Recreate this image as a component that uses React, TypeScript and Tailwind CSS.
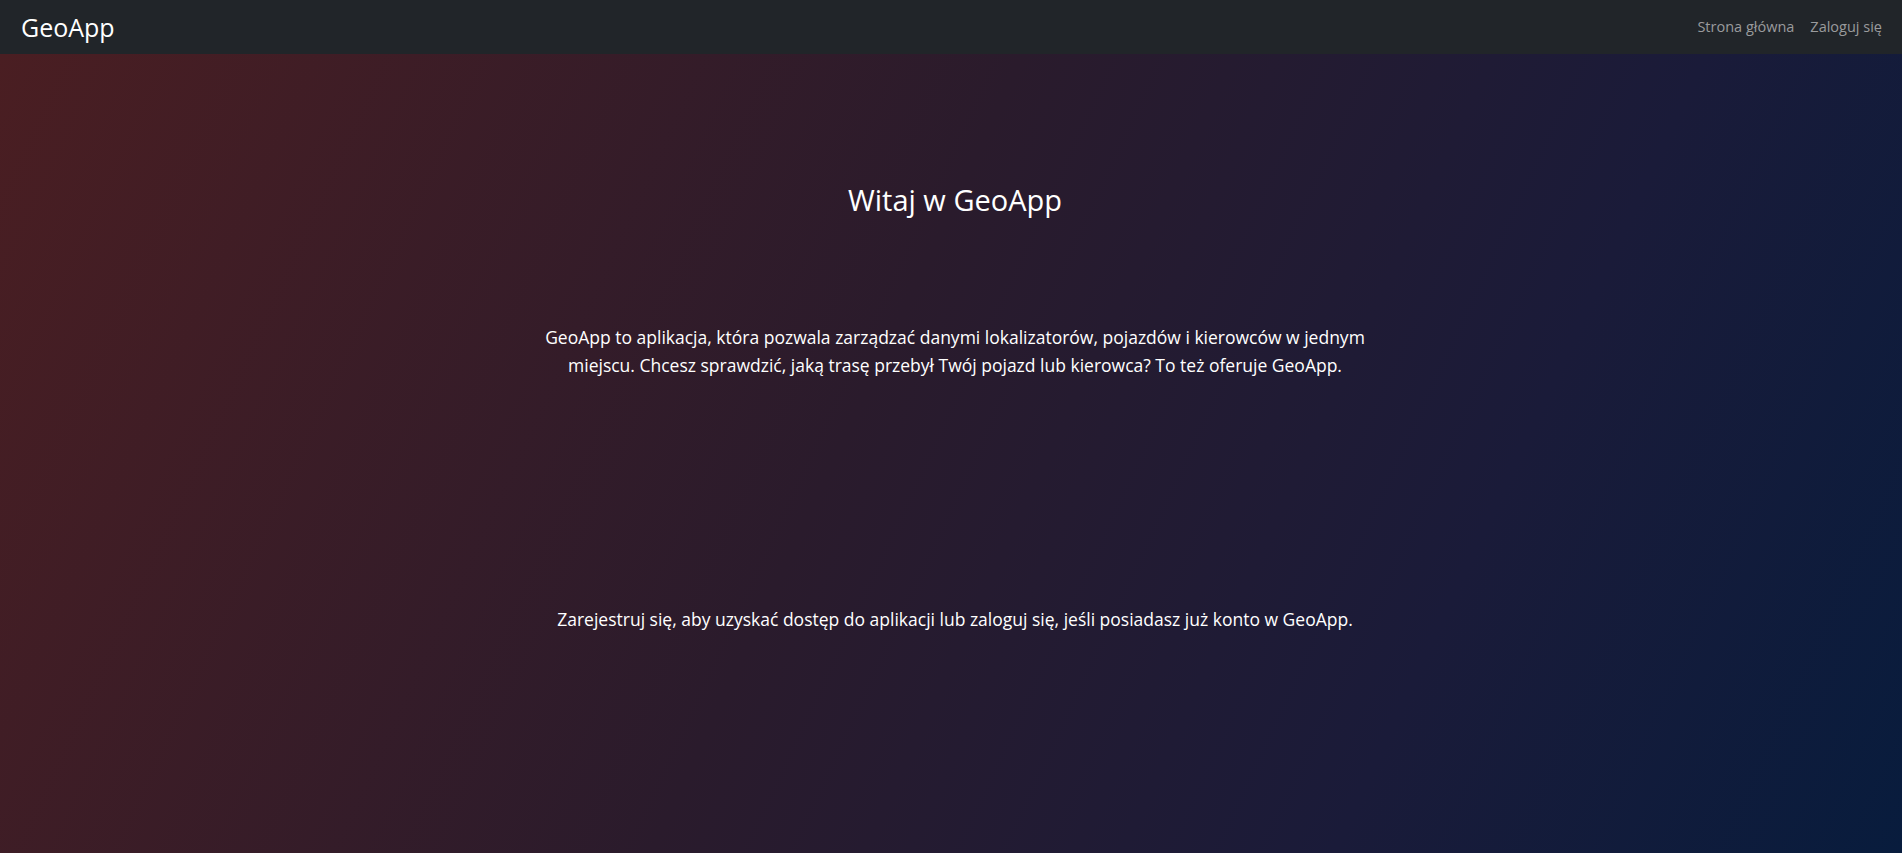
import React from "react";

function App() {
  return (
    <div className="min-h-screen flex flex-col font-['Open_Sans',sans-serif]">
      <nav className="h-[54px] bg-[#212529] flex items-center justify-between pl-[21px] pr-[12px] shrink-0">
        <a className="text-white text-[25px] leading-none" href="#">
          GeoApp
        </a>
        <div className="flex items-center text-[14.5px] text-[#9a9b9d]">
          <a className="px-2" href="#">
            Strona główna
          </a>
          <a className="px-2" href="#">
            Zaloguj się
          </a>
        </div>
      </nav>
      <main className="flex-1 bg-[linear-gradient(115deg,#4a1e22,#2a1b2c_45%,#1a1b39_75%,#081c3d)] text-white">
        <div className="max-w-[850px] mx-auto text-center pl-[8px]">
          <h2 className="text-[29px] leading-none pt-[131px]">Witaj w GeoApp</h2>
          <p className="text-[17.5px] leading-[28px] mt-[109px]">
            GeoApp to aplikacja, która pozwala zarządzać danymi lokalizatorów, pojazdów i kierowców w jednym
            miejscu. Chcesz sprawdzić, jaką trasę przebył Twój pojazd lub kierowca? To też oferuje GeoApp.
          </p>
          <p className="text-[17.5px] leading-[28px] mt-[226px]">
            Zarejestruj się, aby uzyskać dostęp do aplikacji lub zaloguj się, jeśli posiadasz już konto w GeoApp.
          </p>
        </div>
      </main>
    </div>
  );
}

export default App;
